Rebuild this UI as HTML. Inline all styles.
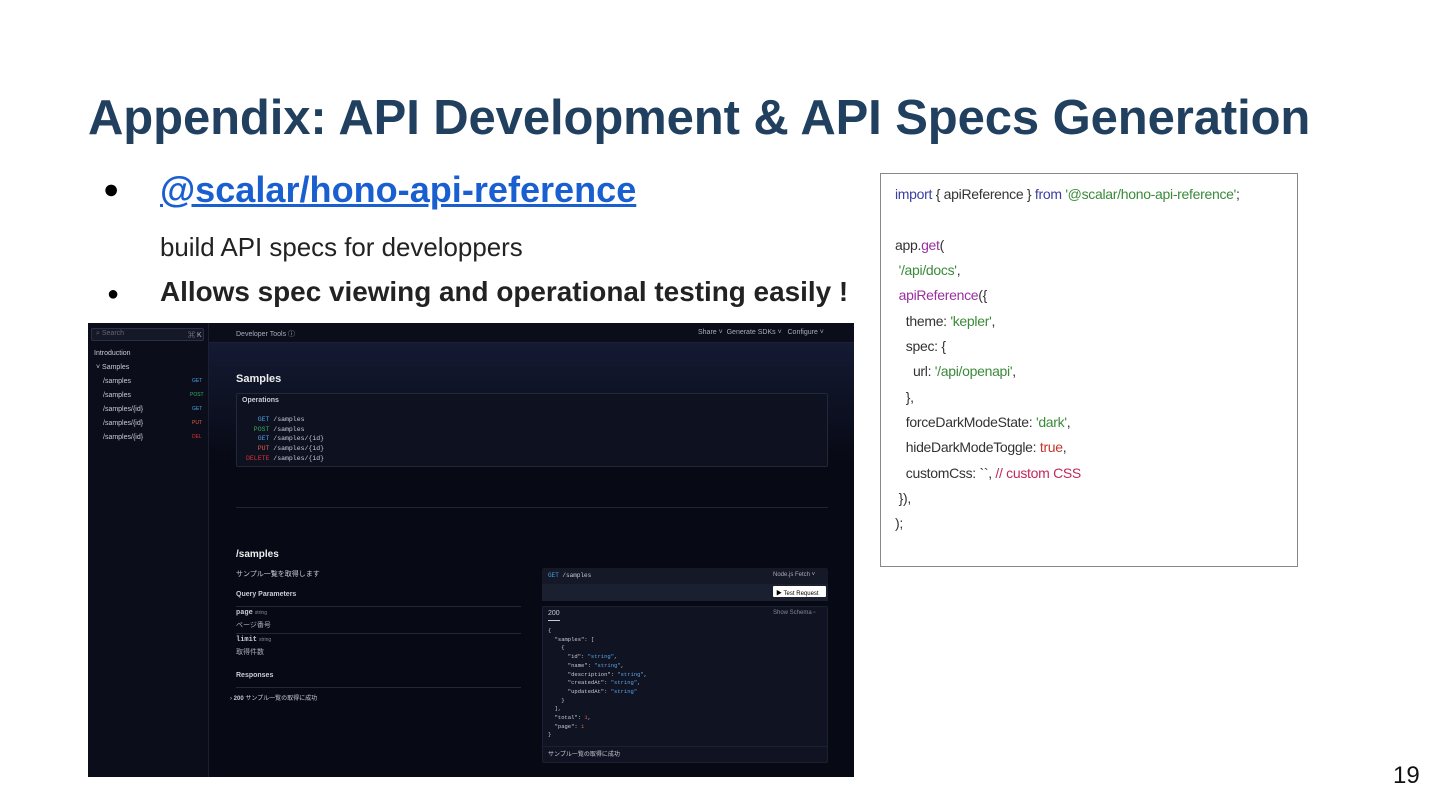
<!DOCTYPE html>
<html><head><meta charset="utf-8"><style>
*{margin:0;padding:0;box-sizing:border-box}
body{width:1440px;height:810px;background:#fff;position:relative;overflow:hidden;font-family:"Liberation Sans","Noto Sans CJK JP",sans-serif}
.a{position:absolute;white-space:nowrap}
h1{position:absolute;left:88px;top:90px;font-size:49px;font-weight:bold;color:#21405f;white-space:nowrap;letter-spacing:-0.1px}
.code{position:absolute;left:880px;top:173px;width:418px;height:394px;border:1.5px solid #888;font-size:14px;color:#333;letter-spacing:-0.3px}
.code div{position:absolute;left:14px;white-space:pre}
.k{color:#3a3fa0}.s{color:#3a8a3a}.p{color:#9a2fa0}.r{color:#c0392b}.c{color:#c0295a}
.ss{position:absolute;left:88px;top:323px;width:766px;height:454px;background:#070914;overflow:hidden;font-size:7px;color:#c8ccd6}
.ss .a{font-size:7px}
.mono{font-family:"Liberation Mono","Noto Sans CJK JP",monospace}
</style></head><body>
<h1>Appendix: API Development &amp; API Specs Generation</h1>
<div class="a" style="left:103px;top:174px;font-size:27px">●</div>
<div class="a" style="left:160px;top:169px;font-size:36.1px;font-weight:bold;color:#1a5fd0;text-decoration:underline">@scalar/hono-api-reference</div>
<div class="a" style="left:160px;top:234px;font-size:25.9px;color:#222">build API specs for developpers</div>
<div class="a" style="left:107px;top:283px;font-size:20px">●</div>
<div class="a" style="left:160px;top:276px;font-size:27.9px;font-weight:bold;color:#222">Allows spec viewing and operational testing easily !</div>

<div class="code">
<div style="top:12px"><span class="k">import</span> { apiReference } <span class="k">from</span> <span class="s">'@scalar/hono-api-reference'</span>;</div>
<div style="top:63px">app.<span class="p">get</span>(</div>
<div style="top:88px"> <span class="s">'/api/docs'</span>,</div>
<div style="top:113px"> <span class="p">apiReference</span>({</div>
<div style="top:139px">   theme: <span class="s">'kepler'</span>,</div>
<div style="top:164px">   spec: {</div>
<div style="top:189px">     url: <span class="s">'/api/openapi'</span>,</div>
<div style="top:215px">   },</div>
<div style="top:240px">   forceDarkModeState: <span class="s">'dark'</span>,</div>
<div style="top:265px">   hideDarkModeToggle: <span class="r">true</span>,</div>
<div style="top:291px">   customCss: ``, <span class="c">// custom CSS</span></div>
<div style="top:316px"> }),</div>
<div style="top:341px">);</div>
</div>

<div class="ss">
 <div style="position:absolute;left:0;top:0;width:121px;height:454px;background:#0b0e1a;border-right:1px solid #1c2030"></div>
 <div style="position:absolute;left:121px;top:0;width:645px;height:20px;background:#0b0e1a;border-bottom:1px solid #1c2030"></div>
 <div style="position:absolute;left:121px;top:20px;width:645px;height:120px;background:linear-gradient(#141a33,#070914)"></div>
 <div style="position:absolute;left:3px;top:5px;width:113px;height:13px;border:1px solid #2a2f42;background:#141827;border-radius:2px"></div>
 <div class="a" style="left:8px;top:7px;color:#667">⌕ Search</div>
 <div class="a" style="left:100px;top:7px;color:#aab">⌘ K</div>
 <div class="a" style="left:6px;top:27px">Introduction</div>
 <div class="a" style="left:8px;top:41px">˅ Samples</div>
 <div class="a" style="left:15px;top:55px">/samples</div><div class="a" style="left:104px;top:55px;font-size:5px;color:#4aa0e0">GET</div>
 <div class="a" style="left:15px;top:69px">/samples</div><div class="a" style="left:102px;top:69px;font-size:5px;color:#3ab060">POST</div>
 <div class="a" style="left:15px;top:83px">/samples/{id}</div><div class="a" style="left:104px;top:83px;font-size:5px;color:#4aa0e0">GET</div>
 <div class="a" style="left:15px;top:97px">/samples/{id}</div><div class="a" style="left:104px;top:97px;font-size:5px;color:#e06040">PUT</div>
 <div class="a" style="left:15px;top:111px">/samples/{id}</div><div class="a" style="left:104px;top:111px;font-size:5px;color:#e03030">DEL</div>
 <div class="a" style="left:148px;top:6px;color:#aab">Developer Tools ⓘ</div>
 <div class="a" style="left:610px;top:6px;color:#aab">Share ˅  &nbsp;Generate SDKs ˅ &nbsp; Configure ˅</div>
 <div class="a" style="left:148px;top:50px;font-size:11px;font-weight:bold;color:#eee">Samples</div>
 <div style="position:absolute;left:148px;top:70px;width:592px;height:74px;border:1px solid #22273a;background:#0d1120;border-radius:2px"></div>
 <div class="a" style="left:154px;top:74px;font-weight:bold">Operations</div>
 <div class="a mono" style="left:158px;top:92px;line-height:9.7px;font-size:6.5px;white-space:pre"><span style="color:#4aa0e0">   GET</span> /samples
<span style="color:#3ab060">  POST</span> /samples
<span style="color:#4aa0e0">   GET</span> /samples/{id}
<span style="color:#e06040">   PUT</span> /samples/{id}
<span style="color:#e03030">DELETE</span> /samples/{id}</div>
 <div style="position:absolute;left:148px;top:184px;width:592px;height:1px;background:#1f2436"></div>
 <div class="a" style="left:148px;top:226px;font-size:10px;font-weight:bold;color:#eee">/samples</div>
 <div class="a" style="left:148px;top:246px">サンプル一覧を取得します</div>
 <div class="a" style="left:148px;top:268px;font-weight:bold">Query Parameters</div>
 <div style="position:absolute;left:148px;top:283px;width:285px;height:1px;background:#22273a"></div>
 <div class="a" style="left:148px;top:286px"><b class="mono">page</b> <span style="color:#889;font-size:5px">string</span></div>
 <div class="a" style="left:148px;top:297px;color:#aab">ページ番号</div>
 <div style="position:absolute;left:148px;top:310px;width:285px;height:1px;background:#22273a"></div>
 <div class="a" style="left:148px;top:313px"><b class="mono">limit</b> <span style="color:#889;font-size:5px">string</span></div>
 <div class="a" style="left:148px;top:324px;color:#aab">取得件数</div>
 <div class="a" style="left:148px;top:349px;font-weight:bold">Responses</div>
 <div style="position:absolute;left:148px;top:364px;width:285px;height:1px;background:#22273a"></div>
 <div class="a" style="left:142px;top:370px;font-size:6px">› <b>200</b> サンプル一覧の取得に成功</div>
 <div style="position:absolute;left:454px;top:245px;width:286px;height:33px;background:#141827;border-radius:2px"></div>
 <div style="position:absolute;left:454px;top:261px;width:286px;height:17px;background:#1b2030"></div>
 <div class="a mono" style="left:460px;top:249px;font-size:6px"><span style="color:#4aa0e0">GET</span> /samples</div>
 <div class="a" style="left:685px;top:249px;color:#aab;font-size:6px">Node.js Fetch ˅</div>
 <div style="position:absolute;left:685px;top:263px;width:53px;height:11px;background:#fff;border-radius:1px"></div>
 <div class="a" style="left:688px;top:265px;color:#000;font-size:6px">▶ Test Request</div>
 <div style="position:absolute;left:454px;top:283px;width:286px;height:157px;background:#0f1322;border:1px solid #1c2132;border-radius:2px"></div>
 <div class="a" style="left:460px;top:287px">200</div>
 <div style="position:absolute;left:460px;top:297px;width:12px;height:1px;background:#ccc"></div>
 <div class="a" style="left:685px;top:287px;color:#889;font-size:6px">Show Schema ▫</div>
 <div class="a mono" style="left:460px;top:304px;font-size:5.5px;line-height:8.7px;white-space:pre">{
  "samples": [
    {
      "id": <span style="color:#5aa0e0">"string"</span>,
      "name": <span style="color:#5aa0e0">"string"</span>,
      "description": <span style="color:#5aa0e0">"string"</span>,
      "createdAt": <span style="color:#5aa0e0">"string"</span>,
      "updatedAt": <span style="color:#5aa0e0">"string"</span>
    }
  ],
  "total": <span style="color:#e06040">1</span>,
  "page": <span style="color:#e06040">1</span>
}</div>
 <div style="position:absolute;left:454px;top:423px;width:286px;height:1px;background:#1c2132"></div>
 <div class="a" style="left:460px;top:426px;font-size:6px">サンプル一覧の取得に成功</div>
</div>
<div class="a" style="left:1393px;top:762px;font-size:24px;color:#111">19</div>
</body></html>
